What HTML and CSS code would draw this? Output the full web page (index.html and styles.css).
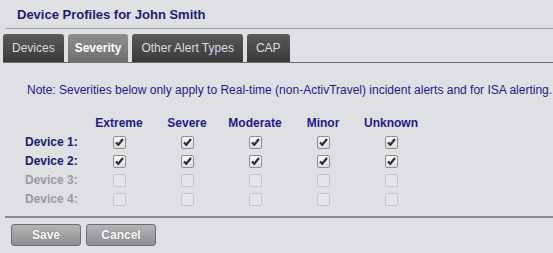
FILE: index.html
```html
<!DOCTYPE html>
<html lang="en">

<head>
    <meta charset="UTF-8">
    <meta name="viewport" content="width=device-width, initial-scale=1.0">
    <title>Device Profiles</title>
    <link rel="stylesheet" href="styles.css">
</head>

<body>
    <div class="page">
        <h1 class="title">Device Profiles for John Smith</h1>

        <div class="tabs">
            <button class="tab">Devices</button>
            <button class="tab active">Severity</button>
            <button class="tab">Other Alert Types</button>
            <button class="tab">CAP</button>
        </div>

        <div class="panel">
            <p class="note">Note: Severities below only apply to Real-time (non-ActivTravel) incident alerts and for ISA alerting.</p>

            <table class="grid">
                <thead>
                    <tr>
                        <th></th>
                        <th>Extreme</th>
                        <th>Severe</th>
                        <th>Moderate</th>
                        <th>Minor</th>
                        <th>Unknown</th>
                    </tr>
                </thead>
                <tbody id="rows"></tbody>
            </table>
        </div>

        <div class="actions">
            <button class="btn">Save</button>
            <button class="btn">Cancel</button>
        </div>
    </div>

    <script>
        const devices = [
            { name: "Device 1:", enabled: true },
            { name: "Device 2:", enabled: true },
            { name: "Device 3:", enabled: false },
            { name: "Device 4:", enabled: false }
        ];
        const tick = '<svg width="9" height="8" viewBox="0 0 9 8"><path d="M1 4.5 L3.3 6.8 L8 1" fill="none" stroke="#2e2e2e" stroke-width="2.2"/></svg>';

        const rows = document.getElementById("rows");
        devices.forEach((d) => {
            const tr = document.createElement("tr");
            if (!d.enabled) tr.classList.add("disabled");
            let html = `<td class="label">${d.name}</td>`;
            for (let i = 0; i < 5; i++) {
                html += `<td><span class="check">${d.enabled ? tick : ""}</span></td>`;
            }
            tr.innerHTML = html;
            rows.appendChild(tr);
        });
    </script>
</body>

</html>
```

FILE: styles.css
```css
body {
    margin: 0;
    padding: 0;
    font-family: "Liberation Sans", Arial, sans-serif;
    background-color: #dfe0e3;
}

.page {
    width: 553px;
    height: 253px;
}

.title {
    margin: 0 0 0 5px;
    padding: 7px 0 0 12px;
    height: 21px;
    font-size: 13px;
    font-weight: bold;
    color: #1f1a78;
    border-bottom: 1px solid #a3a3a6;
}

.tabs {
    display: flex;
    gap: 4px;
    margin: 5px 0 0 3px;
    border-bottom: 1px solid #6f6f72;
}

.tab {
    height: 28px;
    padding: 0 9px;
    border: none;
    border-radius: 3px 3px 0 0;
    background: linear-gradient(#5a5a5a, #3a3a3a);
    color: #d8dbe6;
    font-family: "Liberation Sans", Arial, sans-serif;
    font-size: 12px;
    cursor: pointer;
}

.tab.active {
    padding: 0 7px;
    background: linear-gradient(#8e8e8e, #6e6e6e);
    color: #fff;
    font-weight: bold;
}

.panel {
    padding: 0 0 0 25px;
}

.note {
    margin: 20px 0 0 2px;
    font-size: 12px;
    color: #1f1a8c;
    white-space: nowrap;
}

.grid {
    margin-top: 17px;
    border-collapse: collapse;
}

.grid th {
    width: 68px;
    height: 18px;
    padding: 0;
    font-size: 12px;
    font-weight: bold;
    color: #1f1a8c;
    text-align: center;
}

.grid th:first-child {
    width: 60px;
}

.grid td {
    height: 19px;
    padding: 0;
    text-align: center;
}

.grid td.label {
    text-align: left;
    font-size: 12px;
    font-weight: bold;
    color: #1a1a6e;
}

.grid tr.disabled td.label {
    color: #9a9a9c;
}

.check {
    display: inline-flex;
    align-items: center;
    justify-content: center;
    width: 11px;
    height: 11px;
    border: 1px solid #8f8f91;
    border-radius: 2px;
    background: linear-gradient(#fafafa, #dcdcdc);
    vertical-align: middle;
}

.disabled .check {
    border-color: #c4c4c6;
    background: #e4e5e8;
}

.actions {
    display: flex;
    gap: 5px;
    margin: 8px 0 0 5px;
    padding: 6px 0 0 6px;
    border-top: 2px solid #8a8a8c;
}

.btn {
    width: 70px;
    height: 22px;
    border: 1px solid #6e6e70;
    border-radius: 3px;
    background: linear-gradient(#b4b4b6, #8e8e90);
    color: #fff;
    font-family: "Liberation Sans", Arial, sans-serif;
    font-size: 12px;
    font-weight: bold;
    text-shadow: 0 0 1px #555;
    cursor: pointer;
}
```
